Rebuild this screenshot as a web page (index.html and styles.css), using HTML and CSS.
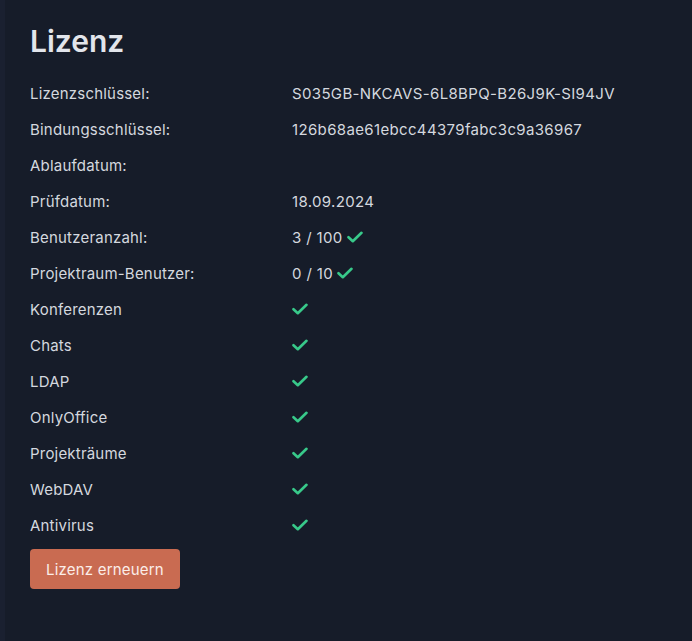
FILE: index.html
```html
<!DOCTYPE html>
<html lang="de">
<head>
  <meta charset="UTF-8">
  <meta name="viewport" content="width=device-width, initial-scale=1.0">
  <title>Lizenz</title>
  <link rel="stylesheet" href="styles.css">
</head>
<body>
  <div class="panel">
    <h1>Lizenz</h1>

    <div class="rows">
      <div class="row"><span class="label">Lizenzschlüssel:</span><span class="value">S035GB-NKCAVS-6L8BPQ-B26J9K-SI94JV</span></div>
      <div class="row"><span class="label">Bindungsschlüssel:</span><span class="value">126b68ae61ebcc44379fabc3c9a36967</span></div>
      <div class="row"><span class="label">Ablaufdatum:</span><span class="value"></span></div>
      <div class="row"><span class="label">Prüfdatum:</span><span class="value">18.09.2024</span></div>
      <div class="row"><span class="label">Benutzeranzahl:</span><span class="value">3 / 100 <svg class="check" viewBox="0 0 16 12"><path d="M1.5 6.2 L5.8 10.2 L14.5 1.8"/></svg></span></div>
      <div class="row"><span class="label">Projektraum-Benutzer:</span><span class="value">0 / 10 <svg class="check" viewBox="0 0 16 12"><path d="M1.5 6.2 L5.8 10.2 L14.5 1.8"/></svg></span></div>
      <div class="row"><span class="label">Konferenzen</span><span class="value"><svg class="check" viewBox="0 0 16 12"><path d="M1.5 6.2 L5.8 10.2 L14.5 1.8"/></svg></span></div>
      <div class="row"><span class="label">Chats</span><span class="value"><svg class="check" viewBox="0 0 16 12"><path d="M1.5 6.2 L5.8 10.2 L14.5 1.8"/></svg></span></div>
      <div class="row"><span class="label">LDAP</span><span class="value"><svg class="check" viewBox="0 0 16 12"><path d="M1.5 6.2 L5.8 10.2 L14.5 1.8"/></svg></span></div>
      <div class="row"><span class="label">OnlyOffice</span><span class="value"><svg class="check" viewBox="0 0 16 12"><path d="M1.5 6.2 L5.8 10.2 L14.5 1.8"/></svg></span></div>
      <div class="row"><span class="label">Projekträume</span><span class="value"><svg class="check" viewBox="0 0 16 12"><path d="M1.5 6.2 L5.8 10.2 L14.5 1.8"/></svg></span></div>
      <div class="row"><span class="label">WebDAV</span><span class="value"><svg class="check" viewBox="0 0 16 12"><path d="M1.5 6.2 L5.8 10.2 L14.5 1.8"/></svg></span></div>
      <div class="row"><span class="label">Antivirus</span><span class="value"><svg class="check" viewBox="0 0 16 12"><path d="M1.5 6.2 L5.8 10.2 L14.5 1.8"/></svg></span></div>
    </div>

    <button class="renew">Lizenz erneuern</button>
  </div>
</body>
</html>
```

FILE: styles.css
```css
html, body { height: 100%; }
body { margin: 0; background: #161c29; font-family: Inter, "Noto Sans", sans-serif; color: #d4d8df; }
.panel { min-height: 100%; box-sizing: border-box; padding: 21px 30px 30px 25px; border-left: 5px solid #1a2030; }
h1 { margin: 0 0 20px; font-size: 30px; font-weight: 600; color: #e2e5eb; line-height: 40px; }
.rows { display: flex; flex-direction: column; gap: 12px; }
.row { display: flex; align-items: center; height: 24px; font-size: 15px; letter-spacing: 0.2px; }
.label { width: 262px; flex: none; }
.value { display: flex; align-items: center; gap: 4px; letter-spacing: 0.35px; }
.check { width: 16px; height: 12px; fill: none; stroke: #38c98a; stroke-width: 2.6; stroke-linecap: round; stroke-linejoin: round; }
.renew { margin-top: 12px; height: 40px; width: 150px; padding: 0; background: #c96b51; color: #fbeee9; border: none; border-radius: 4px; font-family: Inter, "Noto Sans", sans-serif; font-size: 15px; letter-spacing: 0.2px; cursor: pointer; }
```
